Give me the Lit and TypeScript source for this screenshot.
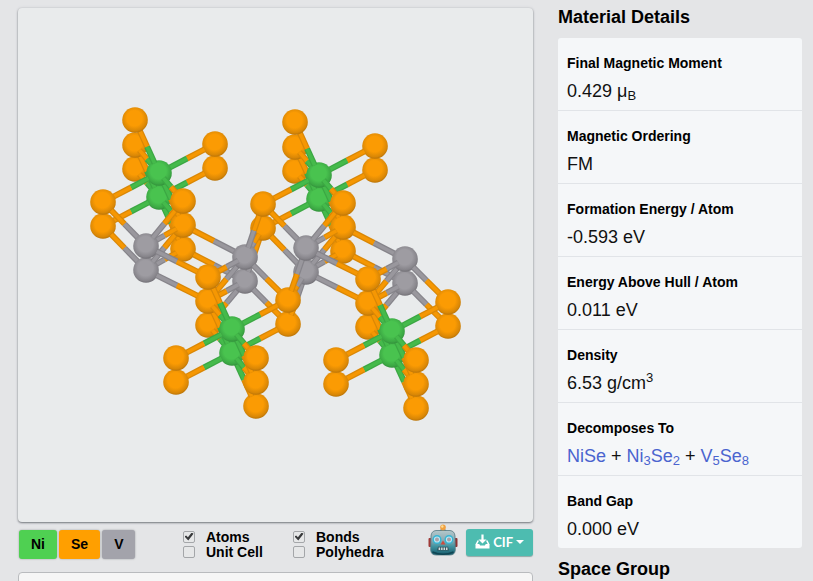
import { LitElement, html, svg, css } from "lit";
import { customElement, property } from "lit/decorators.js";

type Kind = "Se" | "Ni" | "V";
interface Atom { kind: Kind; x: number; y: number; z: number }
interface Shape { z: number; draw: unknown }

const RADIUS = 13;
const PALETTE: Record<Kind, { base: string; rod: string; side: string; edge: string }> = {
  Se: { base: "#fb9b03", rod: "#f59703", side: "#d98706", edge: "#ad6c08" },
  Ni: { base: "#49c34f", rod: "#45ba4b", side: "#3ba743", edge: "#2f8737" },
  V: { base: "#9e9ca2", rod: "#99979d", side: "#86848a", edge: "#69676d" },
};

// Atoms of one repeat unit; z grows towards the viewer.
const CELL: Array<[Kind, number, number, number]> = [
  ["Se", 117, 112, 31], ["Se", 117, 137, -54], ["Se", 117, 161, -139],
  ["Se", 197, 136, -10], ["Se", 197, 160, -95],
  ["Se", 85, 194, 10], ["Se", 85, 218, -75],
  ["Se", 165, 193, 54], ["Se", 165, 217, -31], ["Se", 165, 241, -116],
  ["Ni", 141, 165, 0], ["Ni", 141, 189, -85],
  ["V", 128, 238, 21], ["V", 128, 262, -64],
  ["V", 227, 249, -30], ["V", 227, 273, -115],
  ["Se", 190, 269, 21], ["Se", 190, 293, -64], ["Se", 190, 317, -149],
  ["Se", 270, 292, -20], ["Se", 270, 316, -105],
  ["Ni", 214, 321, -10], ["Ni", 214, 345, -95],
  ["Se", 158, 350, 0], ["Se", 158, 374, -85],
  ["Se", 238, 350, 44], ["Se", 238, 374, -41], ["Se", 238, 398, -126],
];

const BONDS: Array<[number, number]> = [
  [10, 0], [10, 1], [10, 3], [10, 5], [10, 7], [10, 8],
  [11, 1], [11, 2], [11, 4], [11, 6], [11, 8], [11, 9],
  [12, 5], [12, 7], [12, 8], [12, 16],
  [13, 6], [13, 8], [13, 9], [13, 17],
  [14, 8], [14, 16], [14, 17], [14, 19],
  [15, 9], [15, 17], [15, 18], [15, 20],
  [21, 16], [21, 17], [21, 19], [21, 23], [21, 25], [21, 26],
  [22, 17], [22, 18], [22, 20], [22, 24], [22, 26], [22, 27],
];

const N = CELL.length;
// Bonds that join the first repeat unit to the second.
const LINKS: Array<[number, number]> = [
  [14, 5 + N], [14, 6 + N], [15, 6 + N],
  [12 + N, 19], [13 + N, 19], [13 + N, 20],
];

const ATOMS: Atom[] = [0, 1].flatMap((n) =>
  CELL.map(([kind, x, y, z]) => ({ kind, x: x + n * 160, y: y + n * 2, z })),
);

function halfBond(a: Atom, b: Atom): Shape {
  const dx = b.x - a.x;
  const dy = b.y - a.y;
  const dz = b.z - a.z;
  // The rod leaves the sphere where its surface meets the bond direction.
  const t = (RADIUS - 1) / Math.hypot(dx, dy, dz);
  const x1 = a.x + dx * t;
  const y1 = a.y + dy * t;
  const x2 = a.x + dx / 2;
  const y2 = a.y + dy / 2;
  const { rod, side } = PALETTE[a.kind];
  return {
    z: a.z + dz * 0.3,
    draw: svg`
      <line x1=${x1} y1=${y1} x2=${x2} y2=${y2} stroke=${side} stroke-width="6"/>
      <line x1=${x1} y1=${y1} x2=${x2} y2=${y2} stroke=${rod} stroke-width="3.6"/>`,
  };
}

function scene(): unknown[] {
  const pairs = [...BONDS, ...BONDS.map(([a, b]) => [a + N, b + N] as [number, number]), ...LINKS];
  const shapes: Shape[] = ATOMS.map((a) => ({
    z: a.z,
    draw: svg`<circle cx=${a.x} cy=${a.y} r=${RADIUS - 0.2} fill="url(#ball-${a.kind})"/>`,
  }));
  for (const [i, j] of pairs) {
    shapes.push(halfBond(ATOMS[i], ATOMS[j]), halfBond(ATOMS[j], ATOMS[i]));
  }
  return shapes.sort((p, q) => p.z - q.z).map((s) => s.draw);
}

@customElement("crystal-view")
class CrystalView extends LitElement {
  static styles = css`
    :host { display: block; background: #e9ebec; border-radius: 4px; box-shadow: 0 1px 2px #777a80, 0 0 3px #c9cbce; }
    .scene { display: block; width: 100%; }
  `;
  render() {
    return html`<svg class="scene" viewBox="0 0 515 514" role="img" aria-label="Crystal structure">
      <defs>
        ${(Object.keys(PALETTE) as Kind[]).map((k) => svg`
          <radialGradient id="ball-${k}" cx="0.48" cy="0.43" r="0.6">
            <stop offset="0" stop-color=${PALETTE[k].base}/>
            <stop offset="0.5" stop-color=${PALETTE[k].base}/>
            <stop offset="0.82" stop-color=${PALETTE[k].side}/>
            <stop offset="1" stop-color=${PALETTE[k].edge}/>
          </radialGradient>`)}
      </defs>
      ${scene()}
    </svg>`;
  }
}

@customElement("robot-icon")
class RobotIcon extends LitElement {
  static styles = css`
    :host { display: block; width: 30px; height: 32px; }
    .art { display: block; width: 100%; height: 100%; }
  `;
  render() {
    return html`<svg class="art" viewBox="0 0 30 32" aria-hidden="true">
      <defs>
        <linearGradient id="head" x1="0" y1="0" x2="0" y2="1">
          <stop offset="0" stop-color="#b3c8cc"/><stop offset="0.4" stop-color="#8dabb2"/>
          <stop offset="0.65" stop-color="#3f93a0"/><stop offset="1" stop-color="#15596a"/>
        </linearGradient>
      </defs>
      <rect x="0.5" y="14" width="3" height="9" rx="1" fill="#a03a38"/>
      <rect x="26.5" y="14" width="3" height="9" rx="1" fill="#8d3434"/>
      <path d="M11.5 7 L13 5 H17 L18.5 7 Z" fill="#60828b"/>
      <path d="M8 6.500 H22 Q26.600 7 27 12 L27.300 26 Q27 31 22 31 H8 Q3 31 2.700 26 L3 12 Q3.400 7 8 6.500 Z" fill="url(#head)" stroke="#557981" stroke-width="0.800"/>
      <path d="M4.500 28 Q15 32.500 25.500 28" fill="none" stroke="#0f4553" stroke-width="1.400"/>
      <circle cx="15" cy="3.400" r="2.800" fill="#f0a040"/><circle cx="14.300" cy="2.500" r="1.200" fill="#ffdf95"/>
      <circle cx="9" cy="15.500" r="3.800" fill="#b9e9f5" stroke="#35b4d3" stroke-width="1.400"/>
      <circle cx="21" cy="15.500" r="3.800" fill="#b9e9f5" stroke="#35b4d3" stroke-width="1.400"/>
      <circle cx="9" cy="15.500" r="2" fill="#a99fa5"/><circle cx="21" cy="15.500" r="2" fill="#a99fa5"/>
      <path d="M15 16.500 L17.400 20.500 H12.600 Z" fill="#cf4a3d"/>
      <path d="M10 22.800 H20 L21 26.400 H9 Z" fill="#2f525b"/>
      <path d="M10.600 23.400 h1.600 v2.600 h-1.600 z M13.100 23.400 h1.500 v2.600 h-1.500 z M15.500 23.400 h1.500 v2.600 h-1.500 z M17.900 23.400 h1.600 v2.600 h-1.600 z" fill="#d3dfe1"/>
    </svg>`;
  }
}

@customElement("detail-row")
class DetailRow extends LitElement {
  @property() label = "";
  static styles = css`
    :host { display: block; padding: 15px 9px 6px; border-bottom: 1px solid #e1e4e8; }
    :host(:last-of-type) { border-bottom: 0; }
    .label { margin: 0; font-size: 14px; line-height: 20px; font-weight: 700; color: #000; }
    .value { margin: 5px 0 0; font-size: 18px; line-height: 26px; color: #111; }
  `;
  render() {
    return html`<h3 class="label">${this.label}</h3><p class="value"><slot></slot></p>`;
  }
}

@customElement("app-root")
class AppRoot extends LitElement {
  static styles = css`
    :host { display: block; height: 100vh; overflow: hidden; background: #e4e5e7; color: #000; font-family: "Liberation Sans", Arial, sans-serif; }
    .page { display: grid; grid-template-columns: 19fr 9fr; column-gap: 25px; align-items: start; padding: 7px 11px 0 18px; }
    .viewer { padding-top: 1px; }
    .controls { display: flex; align-items: center; height: 44px; margin-bottom: 6px; }
    .elements { display: flex; gap: 2px; width: 165px; padding-left: 1px; box-sizing: border-box; }
    .element { height: 29px; border: 0; border-radius: 3px; padding: 0 12px; font: 700 14px/29px "Liberation Sans", Arial, sans-serif; color: #000; box-shadow: 0 0 2px #96989c; }
    .ni { background: #4fd052; }
    .se { background: #ff9f00; }
    .v { background: #a3a3ab; }
    .options { width: 110px; }
    .option { display: flex; align-items: center; gap: 11px; height: 15px; font-size: 14px; font-weight: 700; white-space: nowrap; }
    .box { appearance: none; flex: none; width: 12px; height: 12px; margin: 0; border: 1px solid #a4a6a9; border-radius: 2px; background: #e6e7e8; display: grid; place-content: center; }
    .box:checked::before { content: ""; width: 9px; height: 8px; background: #38393b; clip-path: polygon(0 50%, 18% 36%, 38% 60%, 80% 0, 100% 14%, 42% 100%); }
    .actions { display: flex; gap: 8px; margin-left: auto; align-items: center; padding-bottom: 4px; }
    .robot { border: 0; padding: 0 0 4px; background: none; }
    .download { display: flex; align-items: center; gap: 3px; height: 27px; padding: 0 9px; border: 0; border-radius: 3px; background: #4dbcb0; color: #fff; font: 700 13px/27px Lato, "Liberation Sans", sans-serif; box-shadow: 0 1px 1px #8fa8a6; }
    .tray { width: 15px; height: 16px; display: block; }
    .caret { border: 4px solid transparent; border-top-color: #fff; border-bottom: 0; }
    .next { height: 40px; border: 1px solid #b9bbbe; border-radius: 4px; background: #f6f6f6; }
    .heading { margin: 0; font-size: 18px; line-height: 20px; font-weight: 700; }
    .card { margin: 11px 0; background: #f5f7f9; border-radius: 3px; overflow: hidden; }
    .link { color: #4a64cf; text-decoration: none; }
    .sub, .sup { font-size: 13px; line-height: 0; }
    .sub { vertical-align: -3px; }
    .sup { vertical-align: super; }
  `;

  option(id: string, text: string, on: boolean) {
    return html`<label class="option" for=${id}><input class="box" id=${id} type="checkbox" .checked=${on}>${text}</label>`;
  }

  sub(text: string) {
    return html`<sub class="sub">${text}</sub>`;
  }

  render() {
    return html`<main class="page">
      <section class="viewer">
        <crystal-view></crystal-view>
        <div class="controls">
          <div class="elements">
            <button class="element ni">Ni</button><button class="element se">Se</button><button class="element v">V</button>
          </div>
          <div class="options">${this.option("atoms", "Atoms", true)}${this.option("cell", "Unit Cell", false)}</div>
          <div class="options">${this.option("bonds", "Bonds", true)}${this.option("poly", "Polyhedra", false)}</div>
          <div class="actions">
            <button class="robot" aria-label="Robot"><robot-icon></robot-icon></button>
            <button class="download">
              <svg class="tray" viewBox="0 0 15 16" aria-hidden="true">
                <path d="M6.400 0.500 h2.200 v5 h2.900 L7.500 9.500 L3.500 5.500 h2.900 z" fill="#fff"/>
                <path d="M3.300 6.500 L1.200 10.500 M11.700 6.500 L13.800 10.500" fill="none" stroke="#fff" stroke-width="1.600"/>
                <path d="M0.500 10 h3.700 l1 1.500 h4.600 l1 -1.500 h3.700 V14.500 h-14 z" fill="#fff"/>
              </svg>CIF<span class="caret"></span>
            </button>
          </div>
        </div>
        <div class="next"></div>
      </section>
      <aside>
        <h2 class="heading">Material Details</h2>
        <div class="card">
          <detail-row label="Final Magnetic Moment">0.429 μ${this.sub("B")}</detail-row>
          <detail-row label="Magnetic Ordering">FM</detail-row>
          <detail-row label="Formation Energy / Atom">-0.593 eV</detail-row>
          <detail-row label="Energy Above Hull / Atom">0.011 eV</detail-row>
          <detail-row label="Density">6.53 g/cm<sup class="sup">3</sup></detail-row>
          <detail-row label="Decomposes To"><a class="link" href="#NiSe">NiSe</a> + <a class="link" href="#Ni3Se2">Ni${this.sub("3")}Se${this.sub("2")}</a> + <a class="link" href="#V5Se8">V${this.sub("5")}Se${this.sub("8")}</a></detail-row>
          <detail-row label="Band Gap">0.000 eV</detail-row>
        </div>
        <h2 class="heading">Space Group</h2>
      </aside>
    </main>`;
  }
}
